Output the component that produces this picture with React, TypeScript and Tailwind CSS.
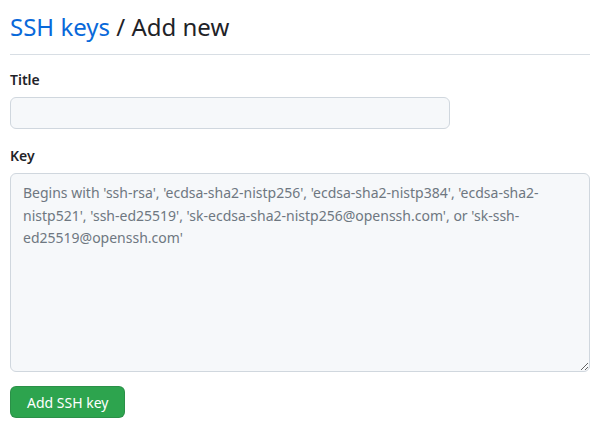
export default function App() {
  return (
    <div
      className="min-h-screen bg-white pl-[10px] pr-[15px] text-[#1f2328]"
      style={{ fontFamily: '"Noto Sans", "Liberation Sans", sans-serif' }}
    >
      {/* header */}
      <div className="flex items-center border-b border-[#d8dee4] pt-[10px] pb-[10px]">
        <h2 className="text-[24px] leading-[34px] font-normal">
          <a href="#" className="text-[#0969da]">SSH keys</a> / Add new
        </h2>
      </div>

      <form className="mt-[15px]" onSubmit={(e) => e.preventDefault()}>
        <div className="mb-[17px]">
          <label className="block mb-[7px] text-[14px] leading-[20px] font-semibold">Title</label>
          <input
            type="text"
            className="block w-[440px] h-[32px] rounded-[6px] border border-[#d0d7de] bg-[#f6f8fa] px-[12px] text-[14px] outline-none"
          />
        </div>

        <div className="mb-[14px]">
          <label className="block mb-[7px] text-[14px] leading-[20px] font-semibold">Key</label>
          <textarea
            className="block w-full h-[199px] rounded-[6px] border border-[#d0d7de] bg-[#f6f8fa] px-[12px] py-[8px] text-[14px] leading-[22.5px] text-[#1f2328] placeholder:text-[#6e7781] outline-none"
            placeholder="Begins with 'ssh-rsa', 'ecdsa-sha2-nistp256', 'ecdsa-sha2-nistp384', 'ecdsa-sha2-nistp521', 'ssh-ed25519', 'sk-ecdsa-sha2-nistp256@openssh.com', or 'sk-ssh-ed25519@openssh.com'"
          />
        </div>

        <button
          type="submit"
          className="h-[32px] rounded-[6px] border border-[rgba(31,35,40,0.15)] bg-[#2da44e] px-[16px] text-[14px] font-normal text-white"
        >
          Add SSH key
        </button>
      </form>
    </div>
  );
}
